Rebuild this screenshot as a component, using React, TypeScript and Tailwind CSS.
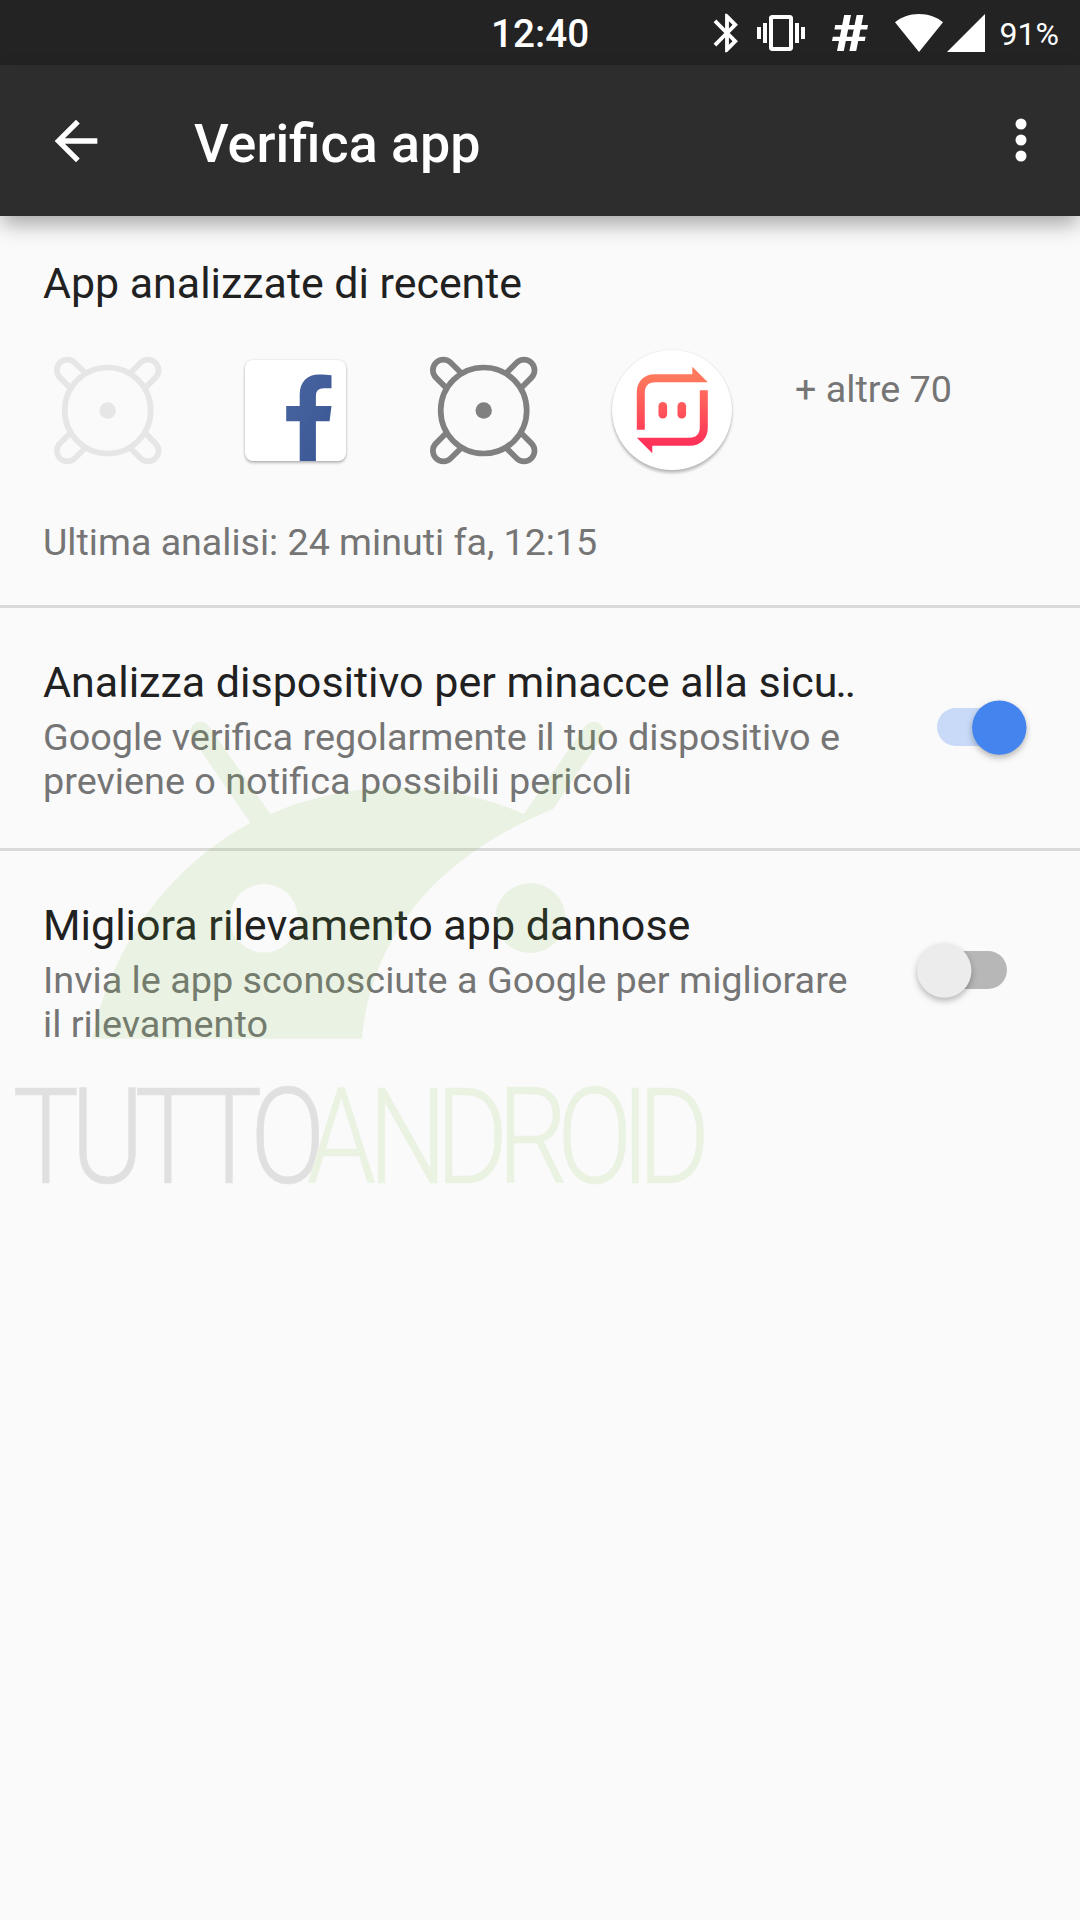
import type { ReactNode } from "react";

function StatusBar() {
  return (
    <div className="flex h-[65px] items-center justify-between bg-[#232323] pr-[21px] pl-[491px] text-white">
      <span className="pt-1 text-[38.7px] leading-none font-medium">12:40</span>
      <div className="flex h-full items-center">
        <svg className="mr-[7px] size-[46px] shrink-0" viewBox="0 0 24 24" fill="currentColor">
          <path d="M17.71 7.71L12 2h-1v7.59L6.41 5 5 6.41 10.59 12 5 17.59 6.41 19 11 14.41V22h1l5.71-5.71-4.3-4.29 4.3-4.29zM13 5.83l1.88 1.88L13 9.59V5.83zm1.88 10.46L13 18.17v-3.76l1.88 1.88z" />
        </svg>
        <svg className="mr-[27px] size-12 shrink-0" viewBox="0 0 24 24" fill="currentColor">
          <path d="M0 15h2V9H0v6zm3 2h2V7H3v10zm19-8v6h2V9h-2zm-3 8h2V7h-2v10zM16.5 3h-9C6.67 3 6 3.67 6 4.5v15c0 .83.67 1.5 1.5 1.5h9c.83 0 1.5-.67 1.5-1.5v-15c0-.83-.67-1.5-1.5-1.5zM16 19H8V5h8v14z" />
        </svg>
        <svg className="mr-[27px] h-9 w-9 shrink-0" viewBox="0 0 36 36" fill="currentColor">
          <path d="M3.2 10H36l-.8 4.4H2.4zM.8 21.7h32.8l-.8 4.4H0z" />
          <path d="M12.2 0H19l-7.2 36H5zM24.6 0h6.8l-7.2 36h-6.8z" />
        </svg>
        <svg className="mr-1 h-[38px] w-12 shrink-0" viewBox="0 0 48 38" fill="currentColor">
          <path d="M24 38L0 8.3C6 3.2 14.5 0 24 0s18 3.2 24 8.3z" />
        </svg>
        <svg className="h-[38px] w-[38px] shrink-0" viewBox="0 0 38 38" fill="currentColor">
          <path d="M0 38L38 0v38z" />
        </svg>
        <span className="ml-[15px] pt-0.5 text-[32px] leading-none">91%</span>
      </div>
    </div>
  );
}

function Toolbar() {
  return (
    <header className="relative flex h-[151px] items-center bg-[#2d2d2d] pr-[27px] pl-[44px] text-white shadow-[0_10px_20px_-2px_rgba(0,0,0,0.34)]">
      <svg className="size-16 shrink-0" viewBox="0 0 24 24" fill="currentColor">
        <path d="M20 11H7.83l5.59-5.59L12 4l-8 8 8 8 1.41-1.41L7.83 13H20v-2z" />
      </svg>
      <h1 className="ml-[86px] flex-1 pt-1.5 text-[53.8px] leading-[64px] font-medium">
        Verifica app
      </h1>
      <svg className="size-16 shrink-0" viewBox="0 0 64 64" fill="currentColor">
        <circle cx="32" cy="15" r="5.5" />
        <circle cx="32" cy="31" r="5.5" />
        <circle cx="32" cy="47" r="5.5" />
      </svg>
    </header>
  );
}

const LEG = "M-10.5 -41.7V-57a10.5 10.5 0 0 1 21 0V-41.7";

function ScarabIcon({ className }: { className: string }) {
  return (
    <svg className={`size-32 shrink-0 ${className}`} viewBox="-64.7 -64.5 128 128">
      <g fill="none" stroke="currentColor" strokeWidth="5.7">
        <circle r="43" />
        <path d={LEG} transform="rotate(45)" />
        <path d={LEG} transform="rotate(135)" />
        <path d={LEG} transform="rotate(225)" />
        <path d={LEG} transform="rotate(315)" />
      </g>
      <circle r="8.2" fill="currentColor" />
    </svg>
  );
}

function FacebookIcon() {
  return (
    <div className="flex size-32 shrink-0 items-center justify-center">
      <svg
        className="size-[101px] rounded-[8px] bg-white shadow-[0_2px_3px_rgba(0,0,0,0.25),0_0_2px_rgba(0,0,0,0.15)]"
        viewBox="0 0 101 101"
      >
        <defs>
          <linearGradient id="fb" x1="0" y1="0" x2="1" y2="1">
            <stop offset="0" stopColor="#4864a0" />
            <stop offset="1" stopColor="#3a5795" />
          </linearGradient>
        </defs>
        <path
          fill="url(#fb)"
          d="M54.7 101V61.3H41.2V46h13.5V34.5C54.7 22 62.2 14.5 74.2 14.5c4.5 0 9 .3 12.3.8V28.3H79.2c-6 0-8.3 2.7-8.3 8V46h15.6l-1.9 15.3H70.9V101z"
        />
      </svg>
    </div>
  );
}

function TransferIcon() {
  return (
    <div className="flex size-32 shrink-0 items-center justify-center pl-px">
      <svg
        className="size-[120px] rounded-full bg-white shadow-[0_3px_3px_rgba(0,0,0,0.24),0_0_2px_rgba(0,0,0,0.12)]"
        viewBox="-60.3 -60.3 120 120"
      >
        <defs>
          <linearGradient id="tr" gradientUnits="userSpaceOnUse" x1="0" y1="-43" x2="0" y2="43">
            <stop offset="0.1" stopColor="#ff7a5c" />
            <stop offset="0.9" stopColor="#ff3059" />
          </linearGradient>
        </defs>
        <g fill="url(#tr)">
          <path d="M-35.5 19.5V-18c0-10.5 7-18 18-18h37.5v-7.5L35.5-28H-17c-7 0-10.5 4-10.5 10.5v37z" />
          <path d="M35.5-20v37.5c0 10.5-7 18-18 18H-20v7.5L-35.5 27.5H17c7 0 10.5-4 10.5-10.5v-37z" />
          <rect x="-13.8" y="-8.3" width="8.6" height="16.6" rx="4.3" />
          <rect x="5.2" y="-8.3" width="8.6" height="16.6" rx="4.3" />
        </g>
      </svg>
    </div>
  );
}

function Switch({ on }: { on?: boolean }) {
  return (
    <svg className="h-[70px] w-[130px] shrink-0 overflow-visible" viewBox="0 0 130 70">
      <rect x="28" y="16" width="70" height="38" rx="19" fill={on ? "#c8daf8" : "#b7b7b7"} />
      <circle
        className="drop-shadow-[0_3px_3px_rgba(0,0,0,0.28)]"
        cx={on ? 90.3 : 35.3}
        cy="35.6"
        r="27.2"
        fill={on ? "#4384ee" : "#ececec"}
      />
    </svg>
  );
}

type RowProps = {
  title: ReactNode;
  on?: boolean;
  last?: boolean;
  children: ReactNode;
};

function SettingRow({ title, on, last, children }: RowProps) {
  return (
    <section
      className={`flex h-[243px] justify-between pr-[41px] pl-[43px] ${last ? "" : "border-b-[3px] border-[#dadada]"}`}
    >
      <div className="pt-[49px]">
        <h2 className="text-[43px] leading-[50px] whitespace-nowrap text-[#212121]">{title}</h2>
        <p className="mt-2 text-[37.8px] leading-[44px] whitespace-nowrap text-[#757575]">{children}</p>
      </div>
      <div className="pt-[84px]">
        <Switch on={on} />
      </div>
    </section>
  );
}

function Watermark() {
  return (
    <svg
      className="pointer-events-none absolute top-[700px] left-0 h-[540px] w-[720px] overflow-visible"
      viewBox="0 700 720 540"
    >
      <defs>
        <clipPath id="cut">
          <path d="M0 1040H350.5L291 1240H0z" />
        </clipPath>
      </defs>
      <g fill="#75b732" fillOpacity="0.115">
        <path
          fillRule="evenodd"
          d="M92.3 1038.7A316 316 0 0 1 250.2 822.7L192.1 737.8A10.2 10.2 0 0 1 208.9 726.2L270.4 814A316 316 0 0 1 523.9 814L585.1 726.2A10.2 10.2 0 0 1 601.9 737.8L553.3 808.7C430 860 372 940 361.8 1038.7zM264 884a34 34.3 0 1 0 .01 0z"
        />
        <circle cx="530.3" cy="918" r="35" />
      </g>
      <g fontFamily="Roboto, sans-serif" fontWeight="300" fontSize="133.6" strokeWidth="0.6">
        <g clipPath="url(#cut)" opacity="0.115">
          <text
            transform="translate(0 1183) scale(.835 1)"
            x="15.1 84.6 161 234.5 299.3"
            fill="#212121"
            stroke="#212121"
          >
            TUTTO
          </text>
        </g>
        <g opacity="0.115">
          <text
            transform="translate(0 1183) scale(.835 1)"
            x="367.2 440.8 521.2 595.6 667 743 763.2"
            fill="#75b732"
            stroke="#75b732"
          >
            ANDROID
          </text>
        </g>
      </g>
    </svg>
  );
}

export default function App() {
  return (
    <div className="relative h-[1920px] w-[1080px] overflow-hidden bg-[#fafafa] font-[Roboto,sans-serif]">
      <StatusBar />
      <Toolbar />
      <main>
        <section className="h-[392px] border-b-[3px] border-[#dadada] px-[43px] pt-[42px]">
          <h2 className="text-[42.9px] leading-[50px] text-[#212121]">App analizzate di recente</h2>
          <div className="mt-[38px] flex gap-[60px]">
            <ScarabIcon className="text-[#e6e6e6]" />
            <FacebookIcon />
            <ScarabIcon className="text-[#808080]" />
            <TransferIcon />
            <span className="pt-[21px] text-[37.7px] leading-[44px] whitespace-nowrap text-[#757575]">
              + altre 70
            </span>
          </div>
          <p className="mt-[46px] text-[37.6px] leading-[44px] text-[#757575]">
            Ultima analisi: 24 minuti fa, 12:15
          </p>
        </section>
        <SettingRow
          title={
            <>
              Analizza dispositivo per minacce alla sicu<span className="-ml-0.5 tracking-[-2px]">..</span>
            </>
          }
          on
        >
          Google verifica regolarmente il tuo dispositivo e
          <br />
          previene o notifica possibili pericoli
        </SettingRow>
        <SettingRow title="Migliora rilevamento app dannose" last>
          Invia le app sconosciute a Google per migliorare
          <br />
          il rilevamento
        </SettingRow>
      </main>
      <Watermark />
    </div>
  );
}
